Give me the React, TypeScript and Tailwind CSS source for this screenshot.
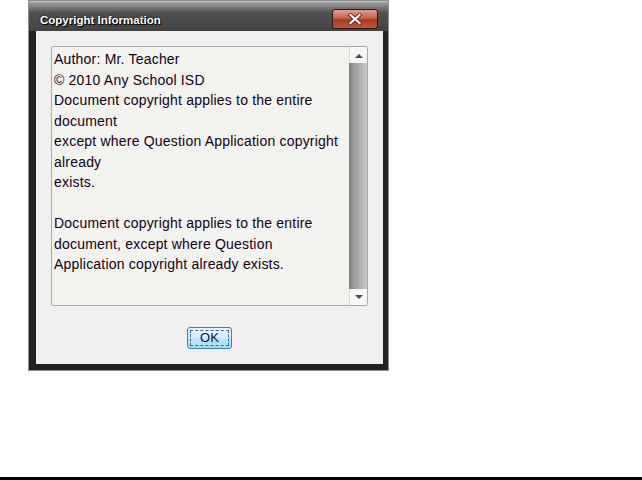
import React from 'react';

const lines = [
  'Author: Mr. Teacher',
  '© 2010 Any School ISD',
  'Document copyright applies to the entire',
  'document',
  'except where Question Application copyright',
  'already',
  'exists.',
  '',
  'Document copyright applies to the entire',
  'document, except where Question',
  'Application copyright already exists.',
];

const CloseButton: React.FC = () => (
  <button className="w-[46px] h-[20px] rounded-[3px] border border-[#2a1a16] bg-[linear-gradient(to_bottom,#e3a08c_0%,#c6634a_45%,#a93a22_55%,#c4553c_100%)] flex items-center justify-center">
    <svg width="16" height="12" viewBox="0 0 16 12">
      <path d="M3.5 2 L12.5 10 M12.5 2 L3.5 10" stroke="#5a2a20" strokeWidth="4" strokeLinecap="square" />
      <path d="M3.5 2 L12.5 10 M12.5 2 L3.5 10" stroke="#ffffff" strokeWidth="2.2" strokeLinecap="square" />
    </svg>
  </button>
);

const ScrollArrow: React.FC<{ up?: boolean }> = ({ up }) => (
  <div className="h-[16px] w-[18px] bg-[#f6f6f4] border-l border-[#dcdcdc] flex items-center justify-center">
    <svg width="8" height="5" viewBox="0 0 8 5">
      {up ? <path d="M0 5 L4 1 L8 5 Z" fill="#4a4a4a" /> : <path d="M0 0 L4 4 L8 0 Z" fill="#4a4a4a" />}
    </svg>
  </div>
);

const App: React.FC = () => {
  return (
    <div className="h-[480px] flex flex-col bg-white font-['Liberation_Sans',Arial,sans-serif]">
      <div className="ml-[28px] w-[361px] h-[371px] border border-[#8e8e8e] bg-[#222222] flex flex-col">
        <div className="h-[30px] shrink-0 flex items-start justify-between pt-[8px] pl-[11px] pr-[10px] bg-[linear-gradient(to_bottom,#c4c4c4_0px,#9a9a9a_2px,#6e6e6e_8px,#505050_12px,#4a4a4a_22px,#424242_30px)]">
          <span className="text-white text-[11.5px] leading-[13px] font-bold [text-shadow:0_0_2px_#000,1px_1px_1px_#000] mt-[5px]">Copyright Information</span>
          <CloseButton />
        </div>
        <div className="flex-1 pl-[7px] pr-[5px] pb-[6px] flex">
          <div className="flex-1 bg-[#f0f0f0] p-[15px] flex flex-col items-center">
            <div className="w-full h-[260px] border border-[#a8a8a8] rounded-[2px] bg-[#f2f2ef] flex">
              <div className="flex-1 pl-[2px] pt-[2px] text-[14px] leading-[20.5px] tracking-[0.2px] text-[#140014] whitespace-pre">
                {lines.map((l, i) => (
                  <div key={i} className="h-[20.5px]">{l}</div>
                ))}
              </div>
              <div className="w-[18px] flex flex-col">
                <ScrollArrow up />
                <div className="flex-1 bg-[linear-gradient(to_right,#7c7c7c_0%,#9a9a9a_25%,#b4b4b4_70%,#c8c8c8_100%)]" />
                <ScrollArrow />
              </div>
            </div>
            <button className="mt-[21px] w-[45px] h-[22px] rounded-[3px] border border-[#3c7fb1] bg-[linear-gradient(to_bottom,#eaf6fd_0%,#d9f0fc_45%,#bee6fd_50%,#a7d9f5_100%)] p-[2px]">
              <div className="h-full w-full border border-dashed border-[#3a6d98] flex items-center justify-center text-[13px] text-[#101030]">
                OK
              </div>
            </button>
          </div>
        </div>
      </div>
      <div className="mt-auto h-[3px] bg-black" />
    </div>
  );
};

export default App;
